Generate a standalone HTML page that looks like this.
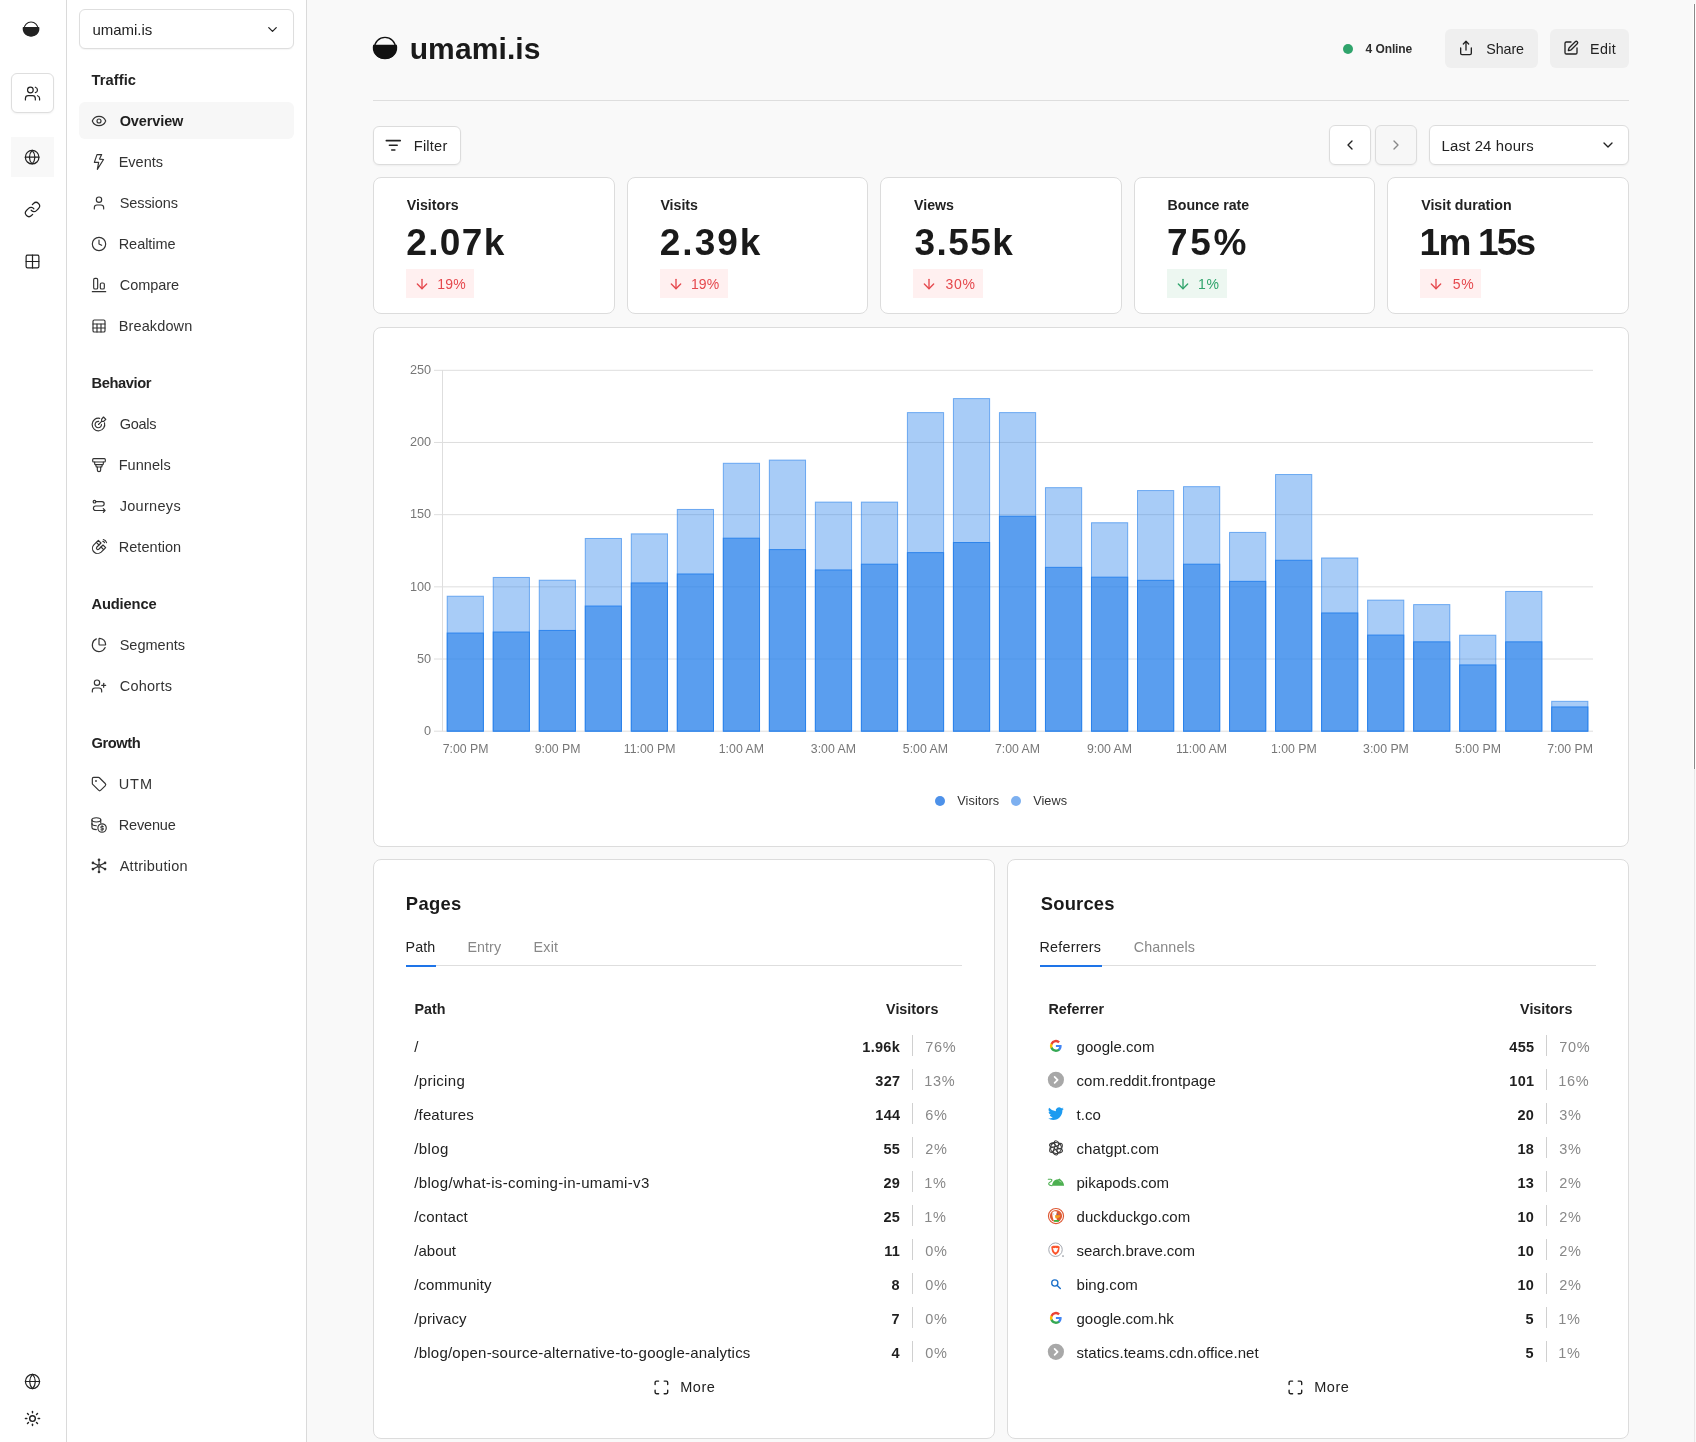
<!DOCTYPE html>
<html><head><meta charset="utf-8"><title>umami</title>
<style>
html,body{margin:0;padding:0;}
body{width:1696px;height:1442px;overflow:hidden;position:relative;background:#f9f9f9;font-family:"Liberation Sans", sans-serif;}
.t{position:absolute;white-space:nowrap;}
.b{position:absolute;box-sizing:content-box;}
.ic{position:absolute;overflow:visible;}
#root{position:absolute;left:0;top:0;width:1696px;height:1442px;will-change:transform;}
</style></head><body><div id="root">
<div class="b" style="left:0px;top:0px;width:66px;height:1442px;background:#fff;border-right:1px solid #dadada;"></div><svg class="ic" style="left:21px;top:19px;width:20px;height:20px" viewBox="21 19 20 20"><circle cx="31.05" cy="29" r="7" fill="none" stroke="#222" stroke-width="1.1"/><path d="M22.9 27 H39.2 A8.15 7.7 0 0 1 31.05 36.5 A8.15 7.7 0 0 1 22.9 27z" fill="#222"/></svg><div class="b" style="left:11px;top:73px;width:41px;height:38px;border:1px solid #dedede;border-radius:6px;background:#fff;box-shadow:0 1px 2px rgba(0,0,0,0.05);"></div><svg class="ic" style="left:23.80px;top:84.50px;width:17px;height:17px;" viewBox="0 0 24 24" fill="none" stroke="#222" stroke-width="1.7" stroke-linecap="round" stroke-linejoin="round"><path d="M16 21v-2a4 4 0 0 0-4-4H6a4 4 0 0 0-4 4v2"/><circle cx="9" cy="7" r="4"/><path d="M22 21v-2a4 4 0 0 0-3-3.87"/><path d="M16 3.13a4 4 0 0 1 0 7.75"/></svg><div class="b" style="left:11px;top:137px;width:43px;height:40px;background:#f8f8f8;"></div><svg class="ic" style="left:24.05px;top:148.85px;width:16.3px;height:16.3px;" viewBox="0 0 24 24" fill="none" stroke="#222" stroke-width="1.8" stroke-linecap="round" stroke-linejoin="round"><circle cx="12" cy="12" r="10"/><path d="M12 2a14.5 14.5 0 0 0 0 20 14.5 14.5 0 0 0 0-20"/><path d="M2 12h20"/></svg><svg class="ic" style="left:23.80px;top:200.50px;width:17px;height:17px;" viewBox="0 0 24 24" fill="none" stroke="#222" stroke-width="1.7" stroke-linecap="round" stroke-linejoin="round"><path d="M10 13a5 5 0 0 0 7.54.54l3-3a5 5 0 0 0-7.07-7.07l-1.72 1.71"/><path d="M14 11a5 5 0 0 0-7.54-.54l-3 3a5 5 0 0 0 7.070 7.07l1.71-1.71"/></svg><svg class="ic" style="left:23.80px;top:252.50px;width:17px;height:17px;" viewBox="0 0 24 24" fill="none" stroke="#222" stroke-width="1.7" stroke-linecap="round" stroke-linejoin="round"><rect width="18" height="18" x="3" y="3" rx="2"/><path d="M3 12h18"/><path d="M12 3v18"/></svg><svg class="ic" style="left:23.50px;top:1372.50px;width:17px;height:17px;" viewBox="0 0 24 24" fill="none" stroke="#222" stroke-width="1.7" stroke-linecap="round" stroke-linejoin="round"><circle cx="12" cy="12" r="10"/><path d="M12 2a14.5 14.5 0 0 0 0 20 14.5 14.5 0 0 0 0-20"/><path d="M2 12h20"/></svg><svg class="ic" style="left:23.50px;top:1409.50px;width:17px;height:17px;" viewBox="0 0 24 24" fill="none" stroke="#222" stroke-width="2" stroke-linecap="round" stroke-linejoin="round"><circle cx="12" cy="12" r="4"/><path d="M12 2v2"/><path d="M12 20v2"/><path d="m4.93 4.93 1.41 1.41"/><path d="m17.66 17.66 1.41 1.41"/><path d="M2 12h2"/><path d="M20 12h2"/><path d="m6.34 17.66-1.41 1.41"/><path d="m19.07 4.93-1.41 1.41"/></svg><div class="b" style="left:67px;top:0px;width:239px;height:1442px;background:#fff;border-right:1px solid #dadada;"></div><div class="b" style="left:79px;top:9px;width:213px;height:38px;border:1px solid #dedede;border-radius:6px;background:#fff;box-shadow:0 1px 1px rgba(0,0,0,0.04);"></div><div class="t" style="left:92.40px;top:20.60px;font-size:15px;line-height:18px;font-weight:400;color:#222;letter-spacing:-0.015px;">umami.is</div><svg class="ic" style="left:265.00px;top:21.50px;width:15px;height:15px;" viewBox="0 0 24 24" fill="none" stroke="#222" stroke-width="2" stroke-linecap="round" stroke-linejoin="round"><path d="m6 9 6 6 6-6"/></svg><div class="b" style="left:79px;top:102px;width:215px;height:37px;background:#f7f7f7;border-radius:6px;"></div><div class="t" style="left:91.50px;top:70.91px;font-size:14.7px;line-height:18px;font-weight:700;color:#222;letter-spacing:0.065px;">Traffic</div><svg class="ic" style="left:91.00px;top:113.00px;width:16px;height:16px;" viewBox="0 0 24 24" fill="none" stroke="#333" stroke-width="1.75" stroke-linecap="round" stroke-linejoin="round"><path d="M2.062 12.348a1 1 0 0 1 0-.696 10.75 10.75 0 0 1 19.876 0 1 1 0 0 1 0 .696 10.75 10.75 0 0 1-19.876 0"/><circle cx="12" cy="12" r="3"/></svg><div class="t" style="left:119.70px;top:113.38px;font-size:14.5px;line-height:17px;font-weight:700;color:#1f1f1f;letter-spacing:-0.115px;">Overview</div><svg class="ic" style="left:91.00px;top:154.00px;width:16px;height:16px;" viewBox="0 0 24 24" fill="none" stroke="#333" stroke-width="1.75" stroke-linecap="round" stroke-linejoin="round"><path d="M9 0.9H16L12.75 7.6L18.8 8.3L9.5 23L11.5 12.5H5z"/></svg><div class="t" style="left:118.70px;top:154.38px;font-size:14.5px;line-height:17px;font-weight:400;color:#333;letter-spacing:-0.016px;">Events</div><svg class="ic" style="left:91.00px;top:195.00px;width:16px;height:16px;" viewBox="0 0 24 24" fill="none" stroke="#333" stroke-width="1.75" stroke-linecap="round" stroke-linejoin="round"><path d="M19 21v-2a4 4 0 0 0-4-4H9a4 4 0 0 0-4 4v2"/><circle cx="12" cy="7" r="4"/></svg><div class="t" style="left:119.70px;top:195.38px;font-size:14.5px;line-height:17px;font-weight:400;color:#333;letter-spacing:-0.084px;">Sessions</div><svg class="ic" style="left:91.00px;top:236.00px;width:16px;height:16px;" viewBox="0 0 24 24" fill="none" stroke="#333" stroke-width="1.75" stroke-linecap="round" stroke-linejoin="round"><circle cx="12" cy="12" r="10"/><polyline points="12 6 12 12 16 14"/></svg><div class="t" style="left:118.70px;top:236.38px;font-size:14.5px;line-height:17px;font-weight:400;color:#333;letter-spacing:-0.036px;">Realtime</div><svg class="ic" style="left:91.00px;top:277.00px;width:16px;height:16px;" viewBox="0 0 24 24" fill="none" stroke="#333" stroke-width="1.75" stroke-linecap="round" stroke-linejoin="round"><rect width="6" height="16" x="4" y="2" rx="2"/><rect width="6" height="9" x="14" y="9" rx="2"/><path d="M22 22H2"/></svg><div class="t" style="left:119.70px;top:277.38px;font-size:14.5px;line-height:17px;font-weight:400;color:#333;letter-spacing:-0.029px;">Compare</div><svg class="ic" style="left:91.00px;top:318.00px;width:16px;height:16px;" viewBox="0 0 24 24" fill="none" stroke="#333" stroke-width="1.75" stroke-linecap="round" stroke-linejoin="round"><rect width="18" height="18" x="3" y="3" rx="2"/><path d="M3 9h18"/><path d="M3 15h18"/><path d="M9 9v12"/><path d="M15 9v12"/></svg><div class="t" style="left:118.70px;top:318.38px;font-size:14.5px;line-height:17px;font-weight:400;color:#333;letter-spacing:0.128px;">Breakdown</div><div class="t" style="left:91.50px;top:373.91px;font-size:14.7px;line-height:18px;font-weight:700;color:#222;letter-spacing:-0.419px;">Behavior</div><svg class="ic" style="left:91.00px;top:416.00px;width:16px;height:16px;" viewBox="0 0 24 24" fill="none" stroke="#333" stroke-width="1.75" stroke-linecap="round" stroke-linejoin="round"><path d="M13 3.5A9.45 9.45 0 1 0 20.25 10.2"/><path d="M11.5 8A4.8 4.8 0 1 0 15.75 12.75"/><path d="M11.25 12.75L16 8"/><path d="M16 4.75L18.75 1.5L22.25 5L18.75 8.25L16 8z"/></svg><div class="t" style="left:119.70px;top:416.38px;font-size:14.5px;line-height:17px;font-weight:400;color:#333;letter-spacing:-0.257px;">Goals</div><svg class="ic" style="left:91.00px;top:457.00px;width:16px;height:16px;" viewBox="0 0 24 24" fill="none" stroke="#333" stroke-width="1.75" stroke-linecap="round" stroke-linejoin="round"><rect x="2.5" y="2.5" width="19" height="5" rx="1.5"/><path d="M5.5 7.5v2.5a1.5 1.5 0 0 0 1.5 1.5h10a1.5 1.5 0 0 0 1.5-1.5V7.5"/><path d="M7 11.5l1 3.5h8l1-3.5"/><path d="M9.5 15v4.5a2.5 2.5 0 0 0 5 0V15"/></svg><div class="t" style="left:118.70px;top:457.38px;font-size:14.5px;line-height:17px;font-weight:400;color:#333;letter-spacing:0.061px;">Funnels</div><svg class="ic" style="left:91.00px;top:498.00px;width:16px;height:16px;" viewBox="0 0 24 24" fill="none" stroke="#333" stroke-width="1.75" stroke-linecap="round" stroke-linejoin="round"><circle cx="5.25" cy="5.5" r="2"/><path d="M7.25 5.5H16.5A3.25 3.25 0 0 1 16.5 12H7A3.375 3.375 0 0 0 7 18.75H20.5"/><path d="M18.5 16L21 18.75L18.5 21.5"/></svg><div class="t" style="left:119.70px;top:498.38px;font-size:14.5px;line-height:17px;font-weight:400;color:#333;letter-spacing:0.302px;">Journeys</div><svg class="ic" style="left:91.00px;top:539.00px;width:16px;height:16px;" viewBox="0 0 24 24" fill="none" stroke="#333" stroke-width="1.75" stroke-linecap="round" stroke-linejoin="round"><g transform="rotate(180 12 12)"><path d="m6 15-4-4 6.75-6.77a7.79 7.79 0 0 1 11 11L13 22l-4-4 6.39-6.36a2.14 2.14 0 0 0-3-3L6 15"/><path d="m5 8 4 4"/><path d="m12 15 4 4"/></g><path d="M18.5 0.8a6.5 6.5 0 0 1 4.8 4.8"/><path d="M17.8 3.6a2.8 2.8 0 0 1 2.4 1.9"/></svg><div class="t" style="left:118.70px;top:539.38px;font-size:14.5px;line-height:17px;font-weight:400;color:#333;letter-spacing:0.049px;">Retention</div><div class="t" style="left:91.50px;top:594.91px;font-size:14.7px;line-height:18px;font-weight:700;color:#222;letter-spacing:-0.149px;">Audience</div><svg class="ic" style="left:91.00px;top:637.00px;width:16px;height:16px;" viewBox="0 0 24 24" fill="none" stroke="#333" stroke-width="1.75" stroke-linecap="round" stroke-linejoin="round"><path d="M21 12c.552 0 1.005-.449.95-.998a10 10 0 0 0-8.953-8.951c-.55-.055-.998.398-.998.95v8a1 1 0 0 0 1 1z"/><path d="M21.21 15.89A10 10 0 1 1 8 2.83"/></svg><div class="t" style="left:119.70px;top:637.38px;font-size:14.5px;line-height:17px;font-weight:400;color:#333;letter-spacing:0.009px;">Segments</div><svg class="ic" style="left:91.00px;top:678.00px;width:16px;height:16px;" viewBox="0 0 24 24" fill="none" stroke="#333" stroke-width="1.75" stroke-linecap="round" stroke-linejoin="round"><path d="M16 21v-2a4 4 0 0 0-4-4H6a4 4 0 0 0-4 4v2"/><circle cx="9" cy="7" r="4"/><line x1="19" x2="19" y1="8" y2="14"/><line x1="22" x2="16" y1="11" y2="11"/></svg><div class="t" style="left:119.70px;top:678.38px;font-size:14.5px;line-height:17px;font-weight:400;color:#333;letter-spacing:0.246px;">Cohorts</div><div class="t" style="left:91.50px;top:733.91px;font-size:14.7px;line-height:18px;font-weight:700;color:#222;letter-spacing:-0.425px;">Growth</div><svg class="ic" style="left:91.00px;top:776.00px;width:16px;height:16px;" viewBox="0 0 24 24" fill="none" stroke="#333" stroke-width="1.75" stroke-linecap="round" stroke-linejoin="round"><path d="M12.586 2.586A2 2 0 0 0 11.172 2H4a2 2 0 0 0-2 2v7.172a2 2 0 0 0 .586 1.414l8.704 8.704a2.426 2.426 0 0 0 3.42 0l6.58-6.58a2.426 2.426 0 0 0 0-3.42z"/><circle cx="7.5" cy="7.5" r=".5" fill="currentColor"/></svg><div class="t" style="left:118.70px;top:776.38px;font-size:14.5px;line-height:17px;font-weight:400;color:#333;letter-spacing:0.936px;">UTM</div><svg class="ic" style="left:91.00px;top:817.00px;width:16px;height:16px;" viewBox="0 0 24 24" fill="none" stroke="#333" stroke-width="1.75" stroke-linecap="round" stroke-linejoin="round"><ellipse cx="8" cy="4.3" rx="6.6" ry="3.2"/><path d="M1.4 4.3v11.2c0 1.8 3 3.4 6.6 3.4"/><path d="M1.4 9.8c0 1.8 3 3.3 6.6 3.3"/><path d="M14.6 4.3v4.5"/><circle cx="16.6" cy="16.5" r="6.3"/><path d="M18.3 14.3h-2.3a1.2 1.2 0 0 0 0 2.4h1.2a1.2 1.2 0 0 1 0 2.4h-2.3M16.6 13v1M16.6 19.2v1"/></svg><div class="t" style="left:118.70px;top:817.38px;font-size:14.5px;line-height:17px;font-weight:400;color:#333;letter-spacing:-0.146px;">Revenue</div><svg class="ic" style="left:91.00px;top:858.00px;width:16px;height:16px;" viewBox="0 0 24 24" fill="none" stroke="#333" stroke-width="1.75" stroke-linecap="round" stroke-linejoin="round"><circle cx="12" cy="11.9" r="1.9"/><path d="M12 10V3.5M12 13.8V20.5M10.3 11L3.5 7.7M13.7 11L20.5 7.7M10.3 12.8L3.5 16.3M13.7 12.8L20.5 16.3"/><g fill="#333" stroke="none"><circle cx="12" cy="2.8" r="2"/><circle cx="12" cy="21" r="2"/><circle cx="2.9" cy="7.4" r="2"/><circle cx="21.1" cy="7.4" r="2"/><circle cx="2.9" cy="16.6" r="2"/><circle cx="21.1" cy="16.6" r="2"/></g></svg><div class="t" style="left:119.70px;top:858.38px;font-size:14.5px;line-height:17px;font-weight:400;color:#333;letter-spacing:0.258px;">Attribution</div><svg class="ic" style="left:372px;top:35px;width:26px;height:26px" viewBox="372 35 26 26"><circle cx="385" cy="48" r="10.6" fill="none" stroke="#111" stroke-width="1.4"/><path d="M373.2 44.8 H396.8 A11.9 11.2 0 0 1 385 59.1 A11.9 11.2 0 0 1 373.2 44.8z" fill="#111"/></svg><div class="t" style="left:409.70px;top:30.50px;font-size:30px;line-height:36px;font-weight:700;color:#1a1a1a;letter-spacing:0.105px;">umami.is</div><div class="b" style="left:1343px;top:44px;width:10px;height:10px;background:#30a46c;border-radius:50%;"></div><div class="t" style="left:1365.60px;top:42.14px;font-size:12px;line-height:14px;font-weight:700;color:#2e2e2e;letter-spacing:-0.096px;">4 Online</div><div class="b" style="left:1445px;top:29px;width:93px;height:39px;background:#efefef;border-radius:6px;"></div><svg class="ic" style="left:1458.00px;top:40.00px;width:16px;height:16px;" viewBox="0 0 24 24" fill="none" stroke="#222" stroke-width="2" stroke-linecap="round" stroke-linejoin="round"><path d="M4 12v8a2 2 0 0 0 2 2h12a2 2 0 0 0 2-2v-8"/><polyline points="16 6 12 2 8 6"/><line x1="12" x2="12" y1="2" y2="15"/></svg><div class="t" style="left:1486.30px;top:40.75px;font-size:14.3px;line-height:17px;font-weight:400;color:#222;letter-spacing:-0.100px;">Share</div><div class="b" style="left:1550px;top:29px;width:79px;height:39px;background:#efefef;border-radius:6px;"></div><svg class="ic" style="left:1563.00px;top:40.00px;width:16px;height:16px;" viewBox="0 0 24 24" fill="none" stroke="#222" stroke-width="2" stroke-linecap="round" stroke-linejoin="round"><path d="M12 3H5a2 2 0 0 0-2 2v14a2 2 0 0 0 2 2h14a2 2 0 0 0 2-2v-7"/><path d="M18.375 2.625a1 1 0 0 1 3 3l-9.013 9.014a2 2 0 0 1-.853.505l-2.873.84a.5.5 0 0 1-.62-.62l.84-2.873a2 2 0 0 1 .506-.852z"/></svg><div class="t" style="left:1590.00px;top:40.75px;font-size:14.3px;line-height:17px;font-weight:400;color:#222;letter-spacing:0.346px;">Edit</div><div class="b" style="left:373px;top:100px;width:1256px;height:1px;background:#dedede;"></div><div class="b" style="left:373px;top:126px;width:86px;height:37px;background:#fff;border:1px solid #dcdcdc;border-radius:6px;box-shadow:0 1px 2px rgba(0,0,0,0.05);"></div><svg class="ic" style="left:384.40px;top:135.65px;width:18.6px;height:18.6px;" viewBox="0 0 24 24" fill="none" stroke="#222" stroke-width="2.1" stroke-linecap="round" stroke-linejoin="round"><path d="M3 6h18"/><path d="M7 12h10"/><path d="M10 18h4"/></svg><div class="t" style="left:413.80px;top:136.74px;font-size:14.6px;line-height:18px;font-weight:400;color:#222;letter-spacing:0.206px;">Filter</div><div class="b" style="left:1329px;top:125px;width:40px;height:38px;background:#fff;border:1px solid #dcdcdc;border-radius:6px;box-shadow:0 1px 2px rgba(0,0,0,0.05);"></div><svg class="ic" style="left:1342.00px;top:137.00px;width:16px;height:16px;" viewBox="0 0 24 24" fill="none" stroke="#222" stroke-width="2" stroke-linecap="round" stroke-linejoin="round"><path d="m15 18-6-6 6-6"/></svg><div class="b" style="left:1375px;top:125px;width:40px;height:38px;background:#f7f7f7;border:1px solid #dcdcdc;border-radius:6px;box-shadow:0 1px 2px rgba(0,0,0,0.05);"></div><svg class="ic" style="left:1388.00px;top:137.00px;width:16px;height:16px;" viewBox="0 0 24 24" fill="none" stroke="#888" stroke-width="2" stroke-linecap="round" stroke-linejoin="round"><path d="m9 18 6-6-6-6"/></svg><div class="b" style="left:1429px;top:125px;width:198px;height:38px;background:#fff;border:1px solid #dcdcdc;border-radius:6px;box-shadow:0 1px 2px rgba(0,0,0,0.05);"></div><div class="t" style="left:1441.60px;top:136.64px;font-size:14.9px;line-height:18px;font-weight:400;color:#222;letter-spacing:0.151px;">Last 24 hours</div><svg class="ic" style="left:1600.00px;top:137.00px;width:16px;height:16px;" viewBox="0 0 24 24" fill="none" stroke="#222" stroke-width="2" stroke-linecap="round" stroke-linejoin="round"><path d="m6 9 6 6 6-6"/></svg><div class="b" style="left:373px;top:177px;width:240px;height:135px;background:#fff;border:1px solid #dcdcdc;border-radius:8px;"></div><div class="t" style="left:406.80px;top:197.18px;font-size:14.2px;line-height:17px;font-weight:700;color:#222;">Visitors</div><div class="t" style="left:406.20px;top:221.18px;font-size:37px;line-height:44px;font-weight:700;color:#1a1a1a;letter-spacing:1.397px;">2.07k</div><div class="b" style="left:406px;top:269px;width:68px;height:29px;background:#fff0f0;"></div><svg class="ic" style="left:414.00px;top:276.30px;width:16px;height:16px;" viewBox="0 0 24 24" fill="none" stroke="#e5484d" stroke-width="2" stroke-linecap="round" stroke-linejoin="round"><path d="M12 5v14"/><path d="m19 12-7 7-7-7"/></svg><div class="t" style="left:437.30px;top:275.85px;font-size:14px;line-height:17px;font-weight:400;color:#e5484d;letter-spacing:0.164px;">19%</div><div class="b" style="left:627px;top:177px;width:239px;height:135px;background:#fff;border:1px solid #dcdcdc;border-radius:8px;"></div><div class="t" style="left:660.40px;top:197.18px;font-size:14.2px;line-height:17px;font-weight:700;color:#222;">Visits</div><div class="t" style="left:659.80px;top:221.18px;font-size:37px;line-height:44px;font-weight:700;color:#1a1a1a;letter-spacing:1.997px;">2.39k</div><div class="b" style="left:660px;top:269px;width:68px;height:29px;background:#fff0f0;"></div><svg class="ic" style="left:667.60px;top:276.30px;width:16px;height:16px;" viewBox="0 0 24 24" fill="none" stroke="#e5484d" stroke-width="2" stroke-linecap="round" stroke-linejoin="round"><path d="M12 5v14"/><path d="m19 12-7 7-7-7"/></svg><div class="t" style="left:690.90px;top:275.85px;font-size:14px;line-height:17px;font-weight:400;color:#e5484d;letter-spacing:0.164px;">19%</div><div class="b" style="left:880px;top:177px;width:240px;height:135px;background:#fff;border:1px solid #dcdcdc;border-radius:8px;"></div><div class="t" style="left:914.00px;top:197.18px;font-size:14.2px;line-height:17px;font-weight:700;color:#222;">Views</div><div class="t" style="left:914.40px;top:221.18px;font-size:37px;line-height:44px;font-weight:700;color:#1a1a1a;letter-spacing:1.447px;">3.55k</div><div class="b" style="left:913px;top:269px;width:70px;height:29px;background:#fff0f0;"></div><svg class="ic" style="left:921.20px;top:276.30px;width:16px;height:16px;" viewBox="0 0 24 24" fill="none" stroke="#e5484d" stroke-width="2" stroke-linecap="round" stroke-linejoin="round"><path d="M12 5v14"/><path d="m19 12-7 7-7-7"/></svg><div class="t" style="left:945.50px;top:275.85px;font-size:14px;line-height:17px;font-weight:400;color:#e5484d;letter-spacing:0.714px;">30%</div><div class="b" style="left:1134px;top:177px;width:239px;height:135px;background:#fff;border:1px solid #dcdcdc;border-radius:8px;"></div><div class="t" style="left:1167.60px;top:197.18px;font-size:14.2px;line-height:17px;font-weight:700;color:#222;letter-spacing:-0.040px;">Bounce rate</div><div class="t" style="left:1167.00px;top:221.18px;font-size:37px;line-height:44px;font-weight:700;color:#1a1a1a;letter-spacing:2.722px;">75%</div><div class="b" style="left:1167px;top:269px;width:60px;height:29px;background:#edf7f1;"></div><svg class="ic" style="left:1174.80px;top:276.30px;width:16px;height:16px;" viewBox="0 0 24 24" fill="none" stroke="#30a46c" stroke-width="2" stroke-linecap="round" stroke-linejoin="round"><path d="M12 5v14"/><path d="m19 12-7 7-7-7"/></svg><div class="t" style="left:1198.10px;top:275.85px;font-size:14px;line-height:17px;font-weight:400;color:#30a46c;letter-spacing:0.514px;">1%</div><div class="b" style="left:1387px;top:177px;width:240px;height:135px;background:#fff;border:1px solid #dcdcdc;border-radius:8px;"></div><div class="t" style="left:1421.20px;top:197.18px;font-size:14.2px;line-height:17px;font-weight:700;color:#222;">Visit duration</div><div class="t" style="left:1419.60px;top:221.18px;font-size:37px;line-height:44px;font-weight:700;color:#1a1a1a;letter-spacing:-1.782px;">1m 15s</div><div class="b" style="left:1420px;top:269px;width:61px;height:29px;background:#fff0f0;"></div><svg class="ic" style="left:1428.40px;top:276.30px;width:16px;height:16px;" viewBox="0 0 24 24" fill="none" stroke="#e5484d" stroke-width="2" stroke-linecap="round" stroke-linejoin="round"><path d="M12 5v14"/><path d="m19 12-7 7-7-7"/></svg><div class="t" style="left:1452.70px;top:275.85px;font-size:14px;line-height:17px;font-weight:400;color:#e5484d;letter-spacing:0.714px;">5%</div><div class="b" style="left:373px;top:327px;width:1254px;height:518px;background:#fff;border:1px solid #dcdcdc;border-radius:8px;"></div><svg class="ic" style="left:0;top:0;width:1696px;height:1442px" viewBox="0 0 1696 1442"><line x1="434" x2="1593" y1="731.2" y2="731.2" stroke="#dedede" stroke-width="1"/><line x1="434" x2="1593" y1="659.02" y2="659.02" stroke="#dedede" stroke-width="1"/><line x1="434" x2="1593" y1="586.84" y2="586.84" stroke="#dedede" stroke-width="1"/><line x1="434" x2="1593" y1="514.6600000000001" y2="514.6600000000001" stroke="#dedede" stroke-width="1"/><line x1="434" x2="1593" y1="442.48" y2="442.48" stroke="#dedede" stroke-width="1"/><line x1="434" x2="1593" y1="370.30000000000007" y2="370.30000000000007" stroke="#dedede" stroke-width="1"/><line x1="442.5" x2="442.5" y1="370" y2="731.2" stroke="#dedede" stroke-width="1"/><rect x="447.20" y="596.22" width="36.2" height="134.98" fill="rgba(38,128,235,0.4)" stroke="rgba(38,128,235,0.6)" stroke-width="1"/><rect x="447.20" y="633.04" width="36.2" height="98.16" fill="rgba(38,128,235,0.6)" stroke="rgba(38,128,235,0.9)" stroke-width="1"/><rect x="493.22" y="577.46" width="36.2" height="153.74" fill="rgba(38,128,235,0.4)" stroke="rgba(38,128,235,0.6)" stroke-width="1"/><rect x="493.22" y="632.02" width="36.2" height="99.18" fill="rgba(38,128,235,0.6)" stroke="rgba(38,128,235,0.9)" stroke-width="1"/><rect x="539.24" y="580.20" width="36.2" height="151.00" fill="rgba(38,128,235,0.4)" stroke="rgba(38,128,235,0.6)" stroke-width="1"/><rect x="539.24" y="630.44" width="36.2" height="100.76" fill="rgba(38,128,235,0.6)" stroke="rgba(38,128,235,0.9)" stroke-width="1"/><rect x="585.26" y="538.48" width="36.2" height="192.72" fill="rgba(38,128,235,0.4)" stroke="rgba(38,128,235,0.6)" stroke-width="1"/><rect x="585.26" y="606.04" width="36.2" height="125.16" fill="rgba(38,128,235,0.6)" stroke="rgba(38,128,235,0.9)" stroke-width="1"/><rect x="631.28" y="533.86" width="36.2" height="197.34" fill="rgba(38,128,235,0.4)" stroke="rgba(38,128,235,0.6)" stroke-width="1"/><rect x="631.28" y="582.94" width="36.2" height="148.26" fill="rgba(38,128,235,0.6)" stroke="rgba(38,128,235,0.9)" stroke-width="1"/><rect x="677.30" y="509.46" width="36.2" height="221.74" fill="rgba(38,128,235,0.4)" stroke="rgba(38,128,235,0.6)" stroke-width="1"/><rect x="677.30" y="573.99" width="36.2" height="157.21" fill="rgba(38,128,235,0.6)" stroke="rgba(38,128,235,0.9)" stroke-width="1"/><rect x="723.32" y="463.27" width="36.2" height="267.93" fill="rgba(38,128,235,0.4)" stroke="rgba(38,128,235,0.6)" stroke-width="1"/><rect x="723.32" y="538.19" width="36.2" height="193.01" fill="rgba(38,128,235,0.6)" stroke="rgba(38,128,235,0.9)" stroke-width="1"/><rect x="769.34" y="460.09" width="36.2" height="271.11" fill="rgba(38,128,235,0.4)" stroke="rgba(38,128,235,0.6)" stroke-width="1"/><rect x="769.34" y="549.60" width="36.2" height="181.60" fill="rgba(38,128,235,0.6)" stroke="rgba(38,128,235,0.9)" stroke-width="1"/><rect x="815.36" y="502.10" width="36.2" height="229.10" fill="rgba(38,128,235,0.4)" stroke="rgba(38,128,235,0.6)" stroke-width="1"/><rect x="815.36" y="569.95" width="36.2" height="161.25" fill="rgba(38,128,235,0.6)" stroke="rgba(38,128,235,0.9)" stroke-width="1"/><rect x="861.38" y="502.10" width="36.2" height="229.10" fill="rgba(38,128,235,0.4)" stroke="rgba(38,128,235,0.6)" stroke-width="1"/><rect x="861.38" y="564.18" width="36.2" height="167.02" fill="rgba(38,128,235,0.6)" stroke="rgba(38,128,235,0.9)" stroke-width="1"/><rect x="907.40" y="412.60" width="36.2" height="318.60" fill="rgba(38,128,235,0.4)" stroke="rgba(38,128,235,0.6)" stroke-width="1"/><rect x="907.40" y="552.63" width="36.2" height="178.57" fill="rgba(38,128,235,0.6)" stroke="rgba(38,128,235,0.9)" stroke-width="1"/><rect x="953.42" y="398.59" width="36.2" height="332.61" fill="rgba(38,128,235,0.4)" stroke="rgba(38,128,235,0.6)" stroke-width="1"/><rect x="953.42" y="542.52" width="36.2" height="188.68" fill="rgba(38,128,235,0.6)" stroke="rgba(38,128,235,0.9)" stroke-width="1"/><rect x="999.44" y="412.60" width="36.2" height="318.60" fill="rgba(38,128,235,0.4)" stroke="rgba(38,128,235,0.6)" stroke-width="1"/><rect x="999.44" y="516.25" width="36.2" height="214.95" fill="rgba(38,128,235,0.6)" stroke="rgba(38,128,235,0.9)" stroke-width="1"/><rect x="1045.46" y="487.66" width="36.2" height="243.54" fill="rgba(38,128,235,0.4)" stroke="rgba(38,128,235,0.6)" stroke-width="1"/><rect x="1045.46" y="567.35" width="36.2" height="163.85" fill="rgba(38,128,235,0.6)" stroke="rgba(38,128,235,0.9)" stroke-width="1"/><rect x="1091.48" y="522.74" width="36.2" height="208.46" fill="rgba(38,128,235,0.4)" stroke="rgba(38,128,235,0.6)" stroke-width="1"/><rect x="1091.48" y="577.17" width="36.2" height="154.03" fill="rgba(38,128,235,0.6)" stroke="rgba(38,128,235,0.9)" stroke-width="1"/><rect x="1137.50" y="490.55" width="36.2" height="240.65" fill="rgba(38,128,235,0.4)" stroke="rgba(38,128,235,0.6)" stroke-width="1"/><rect x="1137.50" y="580.34" width="36.2" height="150.86" fill="rgba(38,128,235,0.6)" stroke="rgba(38,128,235,0.9)" stroke-width="1"/><rect x="1183.52" y="486.65" width="36.2" height="244.55" fill="rgba(38,128,235,0.4)" stroke="rgba(38,128,235,0.6)" stroke-width="1"/><rect x="1183.52" y="564.18" width="36.2" height="167.02" fill="rgba(38,128,235,0.6)" stroke="rgba(38,128,235,0.9)" stroke-width="1"/><rect x="1229.54" y="532.42" width="36.2" height="198.78" fill="rgba(38,128,235,0.4)" stroke="rgba(38,128,235,0.6)" stroke-width="1"/><rect x="1229.54" y="581.35" width="36.2" height="149.85" fill="rgba(38,128,235,0.6)" stroke="rgba(38,128,235,0.9)" stroke-width="1"/><rect x="1275.56" y="474.53" width="36.2" height="256.67" fill="rgba(38,128,235,0.4)" stroke="rgba(38,128,235,0.6)" stroke-width="1"/><rect x="1275.56" y="560.28" width="36.2" height="170.92" fill="rgba(38,128,235,0.6)" stroke="rgba(38,128,235,0.9)" stroke-width="1"/><rect x="1321.58" y="557.97" width="36.2" height="173.23" fill="rgba(38,128,235,0.4)" stroke="rgba(38,128,235,0.6)" stroke-width="1"/><rect x="1321.58" y="612.97" width="36.2" height="118.23" fill="rgba(38,128,235,0.6)" stroke="rgba(38,128,235,0.9)" stroke-width="1"/><rect x="1367.60" y="600.12" width="36.2" height="131.08" fill="rgba(38,128,235,0.4)" stroke="rgba(38,128,235,0.6)" stroke-width="1"/><rect x="1367.60" y="635.06" width="36.2" height="96.14" fill="rgba(38,128,235,0.6)" stroke="rgba(38,128,235,0.9)" stroke-width="1"/><rect x="1413.62" y="604.60" width="36.2" height="126.60" fill="rgba(38,128,235,0.4)" stroke="rgba(38,128,235,0.6)" stroke-width="1"/><rect x="1413.62" y="641.84" width="36.2" height="89.36" fill="rgba(38,128,235,0.6)" stroke="rgba(38,128,235,0.9)" stroke-width="1"/><rect x="1459.64" y="635.20" width="36.2" height="96.00" fill="rgba(38,128,235,0.4)" stroke="rgba(38,128,235,0.6)" stroke-width="1"/><rect x="1459.64" y="664.94" width="36.2" height="66.26" fill="rgba(38,128,235,0.6)" stroke="rgba(38,128,235,0.9)" stroke-width="1"/><rect x="1505.66" y="591.46" width="36.2" height="139.74" fill="rgba(38,128,235,0.4)" stroke="rgba(38,128,235,0.6)" stroke-width="1"/><rect x="1505.66" y="641.84" width="36.2" height="89.36" fill="rgba(38,128,235,0.6)" stroke="rgba(38,128,235,0.9)" stroke-width="1"/><rect x="1551.68" y="701.32" width="36.2" height="29.88" fill="rgba(38,128,235,0.4)" stroke="rgba(38,128,235,0.6)" stroke-width="1"/><rect x="1551.68" y="706.95" width="36.2" height="24.25" fill="rgba(38,128,235,0.6)" stroke="rgba(38,128,235,0.9)" stroke-width="1"/></svg><div class="t" style="left:424.10px;top:723.90px;font-size:12.7px;line-height:15px;font-weight:400;color:#777;">0</div><div class="t" style="left:417.04px;top:651.72px;font-size:12.7px;line-height:15px;font-weight:400;color:#777;">50</div><div class="t" style="left:409.99px;top:579.54px;font-size:12.7px;line-height:15px;font-weight:400;color:#777;">100</div><div class="t" style="left:409.99px;top:507.36px;font-size:12.7px;line-height:15px;font-weight:400;color:#777;">150</div><div class="t" style="left:409.99px;top:435.18px;font-size:12.7px;line-height:15px;font-weight:400;color:#777;">200</div><div class="t" style="left:409.99px;top:363.00px;font-size:12.7px;line-height:15px;font-weight:400;color:#777;">250</div><div class="t" style="left:442.67px;top:742.04px;font-size:12.3px;line-height:15px;font-weight:400;color:#777;">7:00 PM</div><div class="t" style="left:534.71px;top:742.04px;font-size:12.3px;line-height:15px;font-weight:400;color:#777;">9:00 PM</div><div class="t" style="left:623.79px;top:742.04px;font-size:12.3px;line-height:15px;font-weight:400;color:#777;">11:00 PM</div><div class="t" style="left:718.79px;top:742.04px;font-size:12.3px;line-height:15px;font-weight:400;color:#777;">1:00 AM</div><div class="t" style="left:810.83px;top:742.04px;font-size:12.3px;line-height:15px;font-weight:400;color:#777;">3:00 AM</div><div class="t" style="left:902.87px;top:742.04px;font-size:12.3px;line-height:15px;font-weight:400;color:#777;">5:00 AM</div><div class="t" style="left:994.91px;top:742.04px;font-size:12.3px;line-height:15px;font-weight:400;color:#777;">7:00 AM</div><div class="t" style="left:1086.95px;top:742.04px;font-size:12.3px;line-height:15px;font-weight:400;color:#777;">9:00 AM</div><div class="t" style="left:1176.03px;top:742.04px;font-size:12.3px;line-height:15px;font-weight:400;color:#777;">11:00 AM</div><div class="t" style="left:1271.03px;top:742.04px;font-size:12.3px;line-height:15px;font-weight:400;color:#777;">1:00 PM</div><div class="t" style="left:1363.07px;top:742.04px;font-size:12.3px;line-height:15px;font-weight:400;color:#777;">3:00 PM</div><div class="t" style="left:1455.11px;top:742.04px;font-size:12.3px;line-height:15px;font-weight:400;color:#777;">5:00 PM</div><div class="t" style="left:1547.15px;top:742.04px;font-size:12.3px;line-height:15px;font-weight:400;color:#777;">7:00 PM</div><div class="b" style="left:935px;top:796px;width:10px;height:10px;background:#4d91e9;border-radius:50%;"></div><div class="t" style="left:957.30px;top:793.80px;font-size:12.7px;line-height:15px;font-weight:400;color:#333;letter-spacing:0.069px;">Visitors</div><div class="b" style="left:1011px;top:796px;width:10px;height:10px;background:#7db0f0;border-radius:50%;"></div><div class="t" style="left:1033.20px;top:793.80px;font-size:12.7px;line-height:15px;font-weight:400;color:#333;letter-spacing:0.057px;">Views</div><div class="b" style="left:373px;top:859px;width:620px;height:578px;background:#fff;border:1px solid #dcdcdc;border-radius:8px;"></div><div class="t" style="left:405.80px;top:893.02px;font-size:18.4px;line-height:22px;font-weight:700;color:#1a1a1a;letter-spacing:0.336px;">Pages</div><div class="b" style="left:406px;top:965px;width:556px;height:1px;background:#dedede;"></div><div class="t" style="left:405.50px;top:938.55px;font-size:14.3px;line-height:17px;font-weight:400;color:#222;letter-spacing:0.114px;">Path</div><div class="b" style="left:406px;top:964.8px;width:30px;height:2.2px;background:#1e74e8;"></div><div class="t" style="left:467.40px;top:938.55px;font-size:14.3px;line-height:17px;font-weight:400;color:#888;letter-spacing:0.070px;">Entry</div><div class="t" style="left:533.60px;top:938.55px;font-size:14.3px;line-height:17px;font-weight:400;color:#888;letter-spacing:0.180px;">Exit</div><div class="t" style="left:414.50px;top:1001.15px;font-size:14.3px;line-height:17px;font-weight:700;color:#222;">Path</div><div class="t" style="left:886.10px;top:1001.15px;font-size:14.3px;line-height:17px;font-weight:700;color:#222;letter-spacing:0.010px;">Visitors</div><div class="t" style="left:414.30px;top:1037.90px;font-size:15px;line-height:18px;font-weight:400;color:#222;">/</div><div class="t" style="left:862.28px;top:1038.58px;font-size:14.5px;line-height:17px;font-weight:700;color:#1f1f1f;letter-spacing:0.3px;">1.96k</div><div class="b" style="left:912px;top:1035px;width:1px;height:21px;background:#d0d0d0;"></div><div class="t" style="left:925.20px;top:1038.58px;font-size:14.5px;line-height:17px;font-weight:400;color:#888;letter-spacing:0.7px;">76%</div><div class="t" style="left:414.30px;top:1071.90px;font-size:15px;line-height:18px;font-weight:400;color:#222;letter-spacing:0.298px;">/pricing</div><div class="t" style="left:875.37px;top:1072.58px;font-size:14.5px;line-height:17px;font-weight:700;color:#1f1f1f;letter-spacing:0.3px;">327</div><div class="b" style="left:912px;top:1069px;width:1px;height:21px;background:#d0d0d0;"></div><div class="t" style="left:924.20px;top:1072.58px;font-size:14.5px;line-height:17px;font-weight:400;color:#888;letter-spacing:0.7px;">13%</div><div class="t" style="left:414.30px;top:1105.90px;font-size:15px;line-height:18px;font-weight:400;color:#222;letter-spacing:0.129px;">/features</div><div class="t" style="left:875.37px;top:1106.58px;font-size:14.5px;line-height:17px;font-weight:700;color:#1f1f1f;letter-spacing:0.3px;">144</div><div class="b" style="left:912px;top:1103px;width:1px;height:21px;background:#d0d0d0;"></div><div class="t" style="left:925.20px;top:1106.58px;font-size:14.5px;line-height:17px;font-weight:400;color:#888;letter-spacing:0.7px;">6%</div><div class="t" style="left:414.30px;top:1139.90px;font-size:15px;line-height:18px;font-weight:400;color:#222;letter-spacing:0.354px;">/blog</div><div class="t" style="left:883.44px;top:1140.58px;font-size:14.5px;line-height:17px;font-weight:700;color:#1f1f1f;letter-spacing:0.3px;">55</div><div class="b" style="left:912px;top:1137px;width:1px;height:21px;background:#d0d0d0;"></div><div class="t" style="left:925.20px;top:1140.58px;font-size:14.5px;line-height:17px;font-weight:400;color:#888;letter-spacing:0.7px;">2%</div><div class="t" style="left:414.30px;top:1173.90px;font-size:15px;line-height:18px;font-weight:400;color:#222;letter-spacing:0.319px;">/blog/what-is-coming-in-umami-v3</div><div class="t" style="left:883.44px;top:1174.58px;font-size:14.5px;line-height:17px;font-weight:700;color:#1f1f1f;letter-spacing:0.3px;">29</div><div class="b" style="left:912px;top:1171px;width:1px;height:21px;background:#d0d0d0;"></div><div class="t" style="left:924.20px;top:1174.58px;font-size:14.5px;line-height:17px;font-weight:400;color:#888;letter-spacing:0.7px;">1%</div><div class="t" style="left:414.30px;top:1207.90px;font-size:15px;line-height:18px;font-weight:400;color:#222;letter-spacing:0.134px;">/contact</div><div class="t" style="left:883.44px;top:1208.58px;font-size:14.5px;line-height:17px;font-weight:700;color:#1f1f1f;letter-spacing:0.3px;">25</div><div class="b" style="left:912px;top:1205px;width:1px;height:21px;background:#d0d0d0;"></div><div class="t" style="left:924.20px;top:1208.58px;font-size:14.5px;line-height:17px;font-weight:400;color:#888;letter-spacing:0.7px;">1%</div><div class="t" style="left:414.30px;top:1241.90px;font-size:15px;line-height:18px;font-weight:400;color:#222;letter-spacing:-0.007px;">/about</div><div class="t" style="left:884.24px;top:1242.58px;font-size:14.5px;line-height:17px;font-weight:700;color:#1f1f1f;letter-spacing:0.3px;">11</div><div class="b" style="left:912px;top:1239px;width:1px;height:21px;background:#d0d0d0;"></div><div class="t" style="left:925.20px;top:1242.58px;font-size:14.5px;line-height:17px;font-weight:400;color:#888;letter-spacing:0.7px;">0%</div><div class="t" style="left:414.30px;top:1275.90px;font-size:15px;line-height:18px;font-weight:400;color:#222;letter-spacing:0.046px;">/community</div><div class="t" style="left:891.50px;top:1276.58px;font-size:14.5px;line-height:17px;font-weight:700;color:#1f1f1f;letter-spacing:0.3px;">8</div><div class="b" style="left:912px;top:1273px;width:1px;height:21px;background:#d0d0d0;"></div><div class="t" style="left:925.20px;top:1276.58px;font-size:14.5px;line-height:17px;font-weight:400;color:#888;letter-spacing:0.7px;">0%</div><div class="t" style="left:414.30px;top:1309.90px;font-size:15px;line-height:18px;font-weight:400;color:#222;letter-spacing:0.074px;">/privacy</div><div class="t" style="left:891.50px;top:1310.58px;font-size:14.5px;line-height:17px;font-weight:700;color:#1f1f1f;letter-spacing:0.3px;">7</div><div class="b" style="left:912px;top:1307px;width:1px;height:21px;background:#d0d0d0;"></div><div class="t" style="left:925.20px;top:1310.58px;font-size:14.5px;line-height:17px;font-weight:400;color:#888;letter-spacing:0.7px;">0%</div><div class="t" style="left:414.30px;top:1343.90px;font-size:15px;line-height:18px;font-weight:400;color:#222;letter-spacing:0.227px;">/blog/open-source-alternative-to-google-analytics</div><div class="t" style="left:891.50px;top:1344.58px;font-size:14.5px;line-height:17px;font-weight:700;color:#1f1f1f;letter-spacing:0.3px;">4</div><div class="b" style="left:912px;top:1341px;width:1px;height:21px;background:#d0d0d0;"></div><div class="t" style="left:925.20px;top:1344.58px;font-size:14.5px;line-height:17px;font-weight:400;color:#888;letter-spacing:0.7px;">0%</div><svg class="ic" style="left:652.50px;top:1378.80px;width:16.8px;height:16.8px;" viewBox="0 0 24 24" fill="none" stroke="#222" stroke-width="2" stroke-linecap="round" stroke-linejoin="round"><path d="M8 3H5a2 2 0 0 0-2 2v3"/><path d="M21 8V5a2 2 0 0 0-2-2h-3"/><path d="M3 16v3a2 2 0 0 0 2 2h3"/><path d="M16 21h3a2 2 0 0 0 2-2v-3"/></svg><div class="t" style="left:680.20px;top:1378.78px;font-size:14.5px;line-height:17px;font-weight:400;color:#222;letter-spacing:0.543px;">More</div><div class="b" style="left:1007px;top:859px;width:620px;height:578px;background:#fff;border:1px solid #dcdcdc;border-radius:8px;"></div><div class="t" style="left:1040.80px;top:893.02px;font-size:18.4px;line-height:22px;font-weight:700;color:#1a1a1a;letter-spacing:0.176px;">Sources</div><div class="b" style="left:1040px;top:965px;width:556px;height:1px;background:#dedede;"></div><div class="t" style="left:1039.50px;top:938.55px;font-size:14.3px;line-height:17px;font-weight:400;color:#222;letter-spacing:0.233px;">Referrers</div><div class="b" style="left:1040px;top:964.8px;width:62px;height:2.2px;background:#1e74e8;"></div><div class="t" style="left:1133.70px;top:938.55px;font-size:14.3px;line-height:17px;font-weight:400;color:#888;letter-spacing:0.120px;">Channels</div><div class="t" style="left:1048.50px;top:1001.15px;font-size:14.3px;line-height:17px;font-weight:700;color:#222;">Referrer</div><div class="t" style="left:1520.10px;top:1001.15px;font-size:14.3px;line-height:17px;font-weight:700;color:#222;letter-spacing:0.010px;">Visitors</div><svg class="ic" style="left:1044.00px;top:1034.00px;width:24px;height:24px" viewBox="0 0 24 24"><g transform="translate(5.9 5.9) scale(0.5)"><path d="M23.5 12.3c0-.8-.1-1.6-.2-2.3H12v4.4h6.5a5.5 5.5 0 0 1-2.4 3.6v3h3.9c2.3-2.1 3.5-5.200 3.500-8.700z" fill="#4285F4"/><path d="M12 24c3.2 0 6-1.1 8-2.900l-3.9-3c-1.100.7-2.400 1.200-4.100 1.200-3.100 0-5.800-2.100-6.700-5H1.300v3.100A12 12 0 0 0 12 24z" fill="#34A853"/><path d="M5.300 14.300a7.300 7.300 0 0 1 0-4.600V6.600H1.300a12 12 0 0 0 0 10.800z" fill="#FBBC05"/><path d="M12 4.800c1.800 0 3.400.6 4.600 1.800l3.500-3.500A12 12 0 0 0 1.300 6.600l4 3.100C6.200 6.900 8.900 4.800 12 4.800z" fill="#EA4335"/></g></svg><div class="t" style="left:1076.50px;top:1037.90px;font-size:15px;line-height:18px;font-weight:400;color:#222;letter-spacing:0.038px;">google.com</div><div class="t" style="left:1509.37px;top:1038.58px;font-size:14.5px;line-height:17px;font-weight:700;color:#1f1f1f;letter-spacing:0.3px;">455</div><div class="b" style="left:1546px;top:1035px;width:1px;height:21px;background:#d0d0d0;"></div><div class="t" style="left:1559.20px;top:1038.58px;font-size:14.5px;line-height:17px;font-weight:400;color:#888;letter-spacing:0.7px;">70%</div><svg class="ic" style="left:1044.00px;top:1068.00px;width:24px;height:24px" viewBox="0 0 24 24"><circle cx="11.9" cy="11.85" r="8.1" fill="#a8a8a8"/><path d="m10.6 8.9 3 3-3 3" fill="none" stroke="#fff" stroke-width="1.7" stroke-linecap="round" stroke-linejoin="round"/></svg><div class="t" style="left:1076.50px;top:1071.90px;font-size:15px;line-height:18px;font-weight:400;color:#222;letter-spacing:0.093px;">com.reddit.frontpage</div><div class="t" style="left:1509.37px;top:1072.58px;font-size:14.5px;line-height:17px;font-weight:700;color:#1f1f1f;letter-spacing:0.3px;">101</div><div class="b" style="left:1546px;top:1069px;width:1px;height:21px;background:#d0d0d0;"></div><div class="t" style="left:1558.20px;top:1072.58px;font-size:14.5px;line-height:17px;font-weight:400;color:#888;letter-spacing:0.7px;">16%</div><svg class="ic" style="left:1044.00px;top:1102.00px;width:24px;height:24px" viewBox="0 0 24 24"><g transform="translate(4.2 5) scale(0.66)"><path d="M23.6 2.6c-.9.4-1.8.6-2.8.8 1-.6 1.8-1.5 2.1-2.7-.9.6-2 1-3.1 1.2A4.9 4.9 0 0 0 11.5 6.4 13.9 13.9 0 0 1 1.4 1.3a4.9 4.9 0 0 0 1.5 6.6c-.8 0-1.6-.3-2.2-.6 0 2.4 1.7 4.4 3.9 4.8-.7.2-1.5.2-2.2.1.6 2 2.4 3.4 4.6 3.4A9.9 9.9 0 0 1 0 17.5 13.9 13.9 0 0 0 7.5 19.7c9.1 0 14-7.5 14-14v-.6c1-.7 1.8-1.6 2.1-2.5z" fill="#1d9bf0"/></g></svg><div class="t" style="left:1076.50px;top:1105.90px;font-size:15px;line-height:18px;font-weight:400;color:#222;letter-spacing:0.088px;">t.co</div><div class="t" style="left:1517.44px;top:1106.58px;font-size:14.5px;line-height:17px;font-weight:700;color:#1f1f1f;letter-spacing:0.3px;">20</div><div class="b" style="left:1546px;top:1103px;width:1px;height:21px;background:#d0d0d0;"></div><div class="t" style="left:1559.20px;top:1106.58px;font-size:14.5px;line-height:17px;font-weight:400;color:#888;letter-spacing:0.7px;">3%</div><svg class="ic" style="left:1044.00px;top:1136.00px;width:24px;height:24px" viewBox="0 0 24 24"><ellipse cx="15.70" cy="11.90" rx="2.1" ry="4.7" transform="rotate(20 15.70 11.90)" fill="none" stroke="#3a3a3a" stroke-width="1.05"/><ellipse cx="13.85" cy="15.10" rx="2.1" ry="4.7" transform="rotate(80 13.85 15.10)" fill="none" stroke="#3a3a3a" stroke-width="1.05"/><ellipse cx="10.15" cy="15.10" rx="2.1" ry="4.7" transform="rotate(140 10.15 15.10)" fill="none" stroke="#3a3a3a" stroke-width="1.05"/><ellipse cx="8.30" cy="11.90" rx="2.1" ry="4.7" transform="rotate(200 8.30 11.90)" fill="none" stroke="#3a3a3a" stroke-width="1.05"/><ellipse cx="10.15" cy="8.70" rx="2.1" ry="4.7" transform="rotate(260 10.15 8.70)" fill="none" stroke="#3a3a3a" stroke-width="1.05"/><ellipse cx="13.85" cy="8.70" rx="2.1" ry="4.7" transform="rotate(320 13.85 8.70)" fill="none" stroke="#3a3a3a" stroke-width="1.05"/></svg><div class="t" style="left:1076.50px;top:1139.90px;font-size:15px;line-height:18px;font-weight:400;color:#222;letter-spacing:0.089px;">chatgpt.com</div><div class="t" style="left:1517.44px;top:1140.58px;font-size:14.5px;line-height:17px;font-weight:700;color:#1f1f1f;letter-spacing:0.3px;">18</div><div class="b" style="left:1546px;top:1137px;width:1px;height:21px;background:#d0d0d0;"></div><div class="t" style="left:1559.20px;top:1140.58px;font-size:14.5px;line-height:17px;font-weight:400;color:#888;letter-spacing:0.7px;">3%</div><svg class="ic" style="left:1044.00px;top:1170.00px;width:24px;height:24px" viewBox="0 0 24 24"><path d="M7.9 15.7C8.4 12.3 10 10.3 12.4 9.5C13.6 9.2 14.5 9.3 15.4 8.4C16.4 9.2 17.8 10.3 18.8 11.8C19.6 13 20 14.4 20.1 15.7z" fill="#4caf50"/><path d="M14.5 10.2c.8.9 1.8 1.500 3 2" stroke="#a8d8a8" stroke-width=".9" fill="none"/><path d="M4.3 9.3H6.9C8.3 9.3 8.2 10.9 6.7 11.700C5.100 12.500 4.300 13.500 4.900 14.600C5.300 15.300 6.300 15.600 7.900 15.700" stroke="#4caf50" stroke-width="1.1" fill="none" stroke-linecap="round"/></svg><div class="t" style="left:1076.50px;top:1173.90px;font-size:15px;line-height:18px;font-weight:400;color:#222;">pikapods.com</div><div class="t" style="left:1517.44px;top:1174.58px;font-size:14.5px;line-height:17px;font-weight:700;color:#1f1f1f;letter-spacing:0.3px;">13</div><div class="b" style="left:1546px;top:1171px;width:1px;height:21px;background:#d0d0d0;"></div><div class="t" style="left:1559.20px;top:1174.58px;font-size:14.5px;line-height:17px;font-weight:400;color:#888;letter-spacing:0.7px;">2%</div><svg class="ic" style="left:1044.00px;top:1204.00px;width:24px;height:24px" viewBox="0 0 24 24"><circle cx="12" cy="12" r="7.55" fill="none" stroke="#de5833" stroke-width="1.15"/><circle cx="12" cy="12" r="6.1" fill="#de5833"/><path d="M8.4 8.4C9.5 7 11.8 6.800 13.2 7.700C12.300 9 12 11 12.300 13C12.500 14.600 12.800 15.800 13.500 17.200L10.300 17.600C9.300 15.500 8.500 13 8.300 10.800z" fill="#fff"/><path d="M10.9 11.3H16.6L15.900 12.900L13.600 14.300H11.400z" fill="#f29a1f"/><circle cx="9.6" cy="10" r=".55" fill="#9aaed0"/><circle cx="13.4" cy="10.300" r=".6" fill="#4a6fb5"/><path d="M10 15.9H15L14.900 17.700H10.100z" fill="#3cb43c"/></svg><div class="t" style="left:1076.50px;top:1207.90px;font-size:15px;line-height:18px;font-weight:400;color:#222;letter-spacing:0.087px;">duckduckgo.com</div><div class="t" style="left:1517.44px;top:1208.58px;font-size:14.5px;line-height:17px;font-weight:700;color:#1f1f1f;letter-spacing:0.3px;">10</div><div class="b" style="left:1546px;top:1205px;width:1px;height:21px;background:#d0d0d0;"></div><div class="t" style="left:1559.20px;top:1208.58px;font-size:14.5px;line-height:17px;font-weight:400;color:#888;letter-spacing:0.7px;">2%</div><svg class="ic" style="left:1044.00px;top:1238.00px;width:24px;height:24px" viewBox="0 0 24 24"><circle cx="11.5" cy="11.7" r="6.75" fill="#fff" stroke="#a4a8b0" stroke-width="1"/><path d="M7.2 8.8L9 7.8H14L15.7 8.800L15.200 12.600C15 14.100 14 15.500 11.500 16.900C9 15.500 8 14.100 7.800 12.600z" fill="#fb542b"/><path d="M8.800 9.900L10.200 10.300L11.500 9.800L12.800 10.300L14.200 9.900L13.200 12.700L12.200 14.200H10.800L9.800 12.700z" fill="#fff"/><circle cx="19" cy="18" r=".85" fill="#8a8f98"/></svg><div class="t" style="left:1076.50px;top:1241.90px;font-size:15px;line-height:18px;font-weight:400;color:#222;letter-spacing:-0.041px;">search.brave.com</div><div class="t" style="left:1517.44px;top:1242.58px;font-size:14.5px;line-height:17px;font-weight:700;color:#1f1f1f;letter-spacing:0.3px;">10</div><div class="b" style="left:1546px;top:1239px;width:1px;height:21px;background:#d0d0d0;"></div><div class="t" style="left:1559.20px;top:1242.58px;font-size:14.5px;line-height:17px;font-weight:400;color:#888;letter-spacing:0.7px;">2%</div><svg class="ic" style="left:1044.00px;top:1272.00px;width:24px;height:24px" viewBox="0 0 24 24"><circle cx="10.8" cy="11" r="3.1" fill="none" stroke="#1a6fc9" stroke-width="1.3"/><path d="m13.2 13.4 3.100 3.100" stroke="#1a6fc9" stroke-width="1.4" stroke-linecap="round"/></svg><div class="t" style="left:1076.50px;top:1275.90px;font-size:15px;line-height:18px;font-weight:400;color:#222;letter-spacing:0.062px;">bing.com</div><div class="t" style="left:1517.44px;top:1276.58px;font-size:14.5px;line-height:17px;font-weight:700;color:#1f1f1f;letter-spacing:0.3px;">10</div><div class="b" style="left:1546px;top:1273px;width:1px;height:21px;background:#d0d0d0;"></div><div class="t" style="left:1559.20px;top:1276.58px;font-size:14.5px;line-height:17px;font-weight:400;color:#888;letter-spacing:0.7px;">2%</div><svg class="ic" style="left:1044.00px;top:1306.00px;width:24px;height:24px" viewBox="0 0 24 24"><g transform="translate(5.9 5.9) scale(0.5)"><path d="M23.5 12.3c0-.8-.1-1.6-.2-2.3H12v4.4h6.5a5.5 5.5 0 0 1-2.4 3.6v3h3.9c2.3-2.1 3.5-5.200 3.500-8.700z" fill="#4285F4"/><path d="M12 24c3.2 0 6-1.1 8-2.900l-3.9-3c-1.100.7-2.400 1.200-4.100 1.200-3.100 0-5.800-2.100-6.700-5H1.300v3.100A12 12 0 0 0 12 24z" fill="#34A853"/><path d="M5.300 14.300a7.300 7.300 0 0 1 0-4.600V6.600H1.300a12 12 0 0 0 0 10.800z" fill="#FBBC05"/><path d="M12 4.800c1.800 0 3.400.6 4.600 1.800l3.500-3.500A12 12 0 0 0 1.300 6.600l4 3.100C6.200 6.900 8.900 4.800 12 4.800z" fill="#EA4335"/></g></svg><div class="t" style="left:1076.50px;top:1309.90px;font-size:15px;line-height:18px;font-weight:400;color:#222;letter-spacing:-0.022px;">google.com.hk</div><div class="t" style="left:1525.50px;top:1310.58px;font-size:14.5px;line-height:17px;font-weight:700;color:#1f1f1f;letter-spacing:0.3px;">5</div><div class="b" style="left:1546px;top:1307px;width:1px;height:21px;background:#d0d0d0;"></div><div class="t" style="left:1558.20px;top:1310.58px;font-size:14.5px;line-height:17px;font-weight:400;color:#888;letter-spacing:0.7px;">1%</div><svg class="ic" style="left:1044.00px;top:1340.00px;width:24px;height:24px" viewBox="0 0 24 24"><circle cx="11.9" cy="11.85" r="8.1" fill="#a8a8a8"/><path d="m10.6 8.9 3 3-3 3" fill="none" stroke="#fff" stroke-width="1.7" stroke-linecap="round" stroke-linejoin="round"/></svg><div class="t" style="left:1076.50px;top:1343.90px;font-size:15px;line-height:18px;font-weight:400;color:#222;letter-spacing:0.056px;">statics.teams.cdn.office.net</div><div class="t" style="left:1525.50px;top:1344.58px;font-size:14.5px;line-height:17px;font-weight:700;color:#1f1f1f;letter-spacing:0.3px;">5</div><div class="b" style="left:1546px;top:1341px;width:1px;height:21px;background:#d0d0d0;"></div><div class="t" style="left:1558.20px;top:1344.58px;font-size:14.5px;line-height:17px;font-weight:400;color:#888;letter-spacing:0.7px;">1%</div><svg class="ic" style="left:1286.50px;top:1378.80px;width:16.8px;height:16.8px;" viewBox="0 0 24 24" fill="none" stroke="#222" stroke-width="2" stroke-linecap="round" stroke-linejoin="round"><path d="M8 3H5a2 2 0 0 0-2 2v3"/><path d="M21 8V5a2 2 0 0 0-2-2h-3"/><path d="M3 16v3a2 2 0 0 0 2 2h3"/><path d="M16 21h3a2 2 0 0 0 2-2v-3"/></svg><div class="t" style="left:1314.20px;top:1378.78px;font-size:14.5px;line-height:17px;font-weight:400;color:#222;letter-spacing:0.543px;">More</div><div class="b" style="left:1693px;top:4px;width:3px;height:765px;background:#fff;"></div><div class="b" style="left:1694px;top:4px;width:1px;height:765px;background:#8a8a8a;"></div><div class="b" style="left:1694px;top:769px;width:1px;height:673px;background:#e8e8e8;"></div>
</div></body></html>
